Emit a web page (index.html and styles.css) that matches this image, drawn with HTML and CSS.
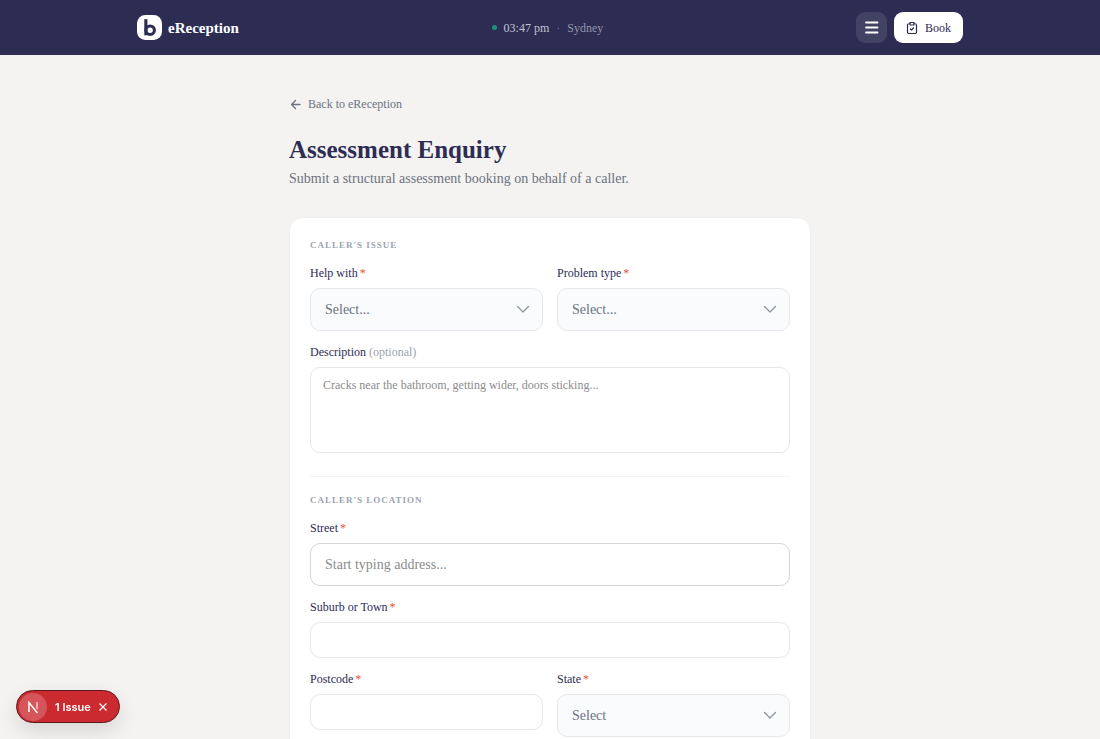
FILE: index.html
```
<!DOCTYPE html>
<html lang="en">
<head>
    <meta charset="UTF-8">
    <meta name="viewport" content="width=device-width, initial-scale=1.0">
    <title>Assessment Enquiry - eReception</title>
    <link rel="stylesheet" href="styles.css">
</head>
<body>

    <header class="topbar">
        <div class="topbar-inner">
            <a href="#" class="brand">
                <svg class="brand-logo" viewBox="0 0 24 24" aria-hidden="true">
                    <rect width="24" height="24" rx="8" fill="#fff"/>
                    <path d="M8.5 4v15.5" fill="none" stroke="#2d2d54" stroke-width="3"/>
                    <circle cx="12.6" cy="14.6" r="4.1" fill="none" stroke="#2d2d54" stroke-width="3"/>
                </svg>
                <span>eReception</span>
            </a>

            <div class="clock">
                <span class="clock-dot"></span>
                <span class="clock-time">03:47 pm</span>
                <span class="clock-sep">·</span>
                <span class="clock-city">Sydney</span>
            </div>

            <div class="actions">
                <button type="button" class="menu-btn" aria-label="Menu">
                    <svg width="17" height="17" viewBox="0 0 17 17" fill="none" stroke="#fff" stroke-width="1.8" stroke-linecap="round" aria-hidden="true">
                        <path d="M3 3.500h11.500M3 8.500h11.500M3 13.500h11.500"/>
                    </svg>
                </button>
                <button type="button" class="book-btn">
                    <svg width="12" height="12" viewBox="0 0 24 24" fill="none" stroke="currentColor" stroke-width="2.4" stroke-linecap="round" stroke-linejoin="round" aria-hidden="true">
                        <rect x="8" y="1" width="8" height="5" rx="1"/>
                        <path d="M16 3.500h2a3 3 0 0 1 3 3V20a3 3 0 0 1-3 3H6a3 3 0 0 1-3-3V6.500a3 3 0 0 1 3-3h2"/>
                        <path d="m9 14 2 2 4-4"/>
                    </svg>
                    Book
                </button>
            </div>
        </div>
    </header>

    <main class="page">
        <a href="#" class="back-link">
            <svg width="13" height="12" viewBox="0 0 13 12" fill="none" stroke="currentColor" stroke-width="1.3" stroke-linecap="round" stroke-linejoin="round" aria-hidden="true">
                <path d="M11 6.500H2.500M6.500 2.500l-4 4 4 4"/>
            </svg>
            Back to eReception
        </a>

        <h1>Assessment Enquiry</h1>
        <p class="subtitle">Submit a structural assessment booking on behalf of a caller.</p>

        <form class="card">
            <section class="form-section">
                <h2>Caller's issue</h2>
                <div class="row">
                    <div class="field">
                        <label for="helpWith">Help with<span class="required">*</span></label>
                        <div class="select-wrap">
                            <select id="helpWith" required>
                                <option value="">Select...</option>
                            </select>
                            <svg class="chevron" viewBox="0 0 14 14" aria-hidden="true"><path d="M1.500 4.500 7 10l5.500-5.500"/></svg>
                        </div>
                    </div>
                    <div class="field">
                        <label for="problemType">Problem type<span class="required">*</span></label>
                        <div class="select-wrap">
                            <select id="problemType" required>
                                <option value="">Select...</option>
                            </select>
                            <svg class="chevron" viewBox="0 0 14 14" aria-hidden="true"><path d="M1.500 4.500 7 10l5.500-5.500"/></svg>
                        </div>
                    </div>
                </div>
                <div class="field">
                    <label for="description">Description <span class="optional">(optional)</span></label>
                    <textarea id="description" placeholder="Cracks near the bathroom, getting wider, doors sticking..."></textarea>
                </div>
            </section>

            <section class="form-section">
                <h2>Caller's location</h2>
                <div class="field">
                    <label for="street">Street<span class="required">*</span></label>
                    <input type="text" id="street" class="address" placeholder="Start typing address..." required>
                </div>
                <div class="field">
                    <label for="suburb">Suburb or Town<span class="required">*</span></label>
                    <input type="text" id="suburb" required>
                </div>
                <div class="row">
                    <div class="field">
                        <label for="postcode">Postcode<span class="required">*</span></label>
                        <input type="text" id="postcode" required>
                    </div>
                    <div class="field">
                        <label for="state">State<span class="required">*</span></label>
                        <div class="select-wrap">
                            <select id="state" required>
                                <option value="">Select</option>
                            </select>
                            <svg class="chevron" viewBox="0 0 14 14" aria-hidden="true"><path d="M1.500 4.500 7 10l5.500-5.500"/></svg>
                        </div>
                    </div>
                </div>
            </section>
        </form>
    </main>

    <div class="issue-badge">
        <button type="button" class="issue-logo" aria-label="Open dev tools">
            <svg width="28" height="28" viewBox="0 0 28 28" fill="none" stroke="#fff" stroke-width="1.5" aria-hidden="true">
                <path d="M10 19V9.500L18.500 20"/>
                <path d="M18 9v7" stroke-opacity="0.7"/>
            </svg>
        </button>
        <button type="button" class="issue-label">1 Issue</button>
        <button type="button" class="issue-close" aria-label="Dismiss">
            <svg width="10" height="10" viewBox="0 0 10 10" fill="none" stroke="#fff" stroke-width="1.2" aria-hidden="true">
                <path d="M1.500 1.500l7 7M8.500 1.500l-7 7"/>
            </svg>
        </button>
    </div>

</body>
</html>
```
FILE: styles.css
```
* {
    box-sizing: border-box;
}
body {
    margin: 0;
    background: #f4f3f1;
    color: #2d2d54;
    font-family: "Liberation Serif", "Times New Roman", serif;
    font-size: 12px;
    line-height: 18px;
}
a {
    color: inherit;
    text-decoration: none;
}
button, input, select, textarea {
    font: inherit;
    color: inherit;
}
button {
    border: none;
    padding: 0;
    background: none;
    cursor: pointer;
}

/* Header */
.topbar {
    background: #2d2d54;
    color: #fff;
}
.topbar-inner {
    display: flex;
    align-items: center;
    justify-content: space-between;
    max-width: 826px;
    height: 55px;
    margin: 0 auto;
}
.brand {
    display: flex;
    align-items: center;
    gap: 6px;
    font-size: 15px;
    font-weight: bold;
}
.brand-logo {
    width: 25px;
    height: 25px;
}
.clock {
    display: flex;
    align-items: center;
    gap: 7px;
}
.clock-dot {
    width: 5px;
    height: 5px;
    border-radius: 50%;
    background: #1c917f;
}
.clock-time {
    color: #c3c3d0;
}
.clock-sep {
    color: #6c6c87;
}
.clock-city {
    color: #9494aa;
}
.actions {
    display: flex;
    gap: 7px;
}
.menu-btn {
    display: flex;
    align-items: center;
    justify-content: center;
    width: 31px;
    height: 31px;
    border-radius: 9px;
    background: #424265;
}
.book-btn {
    display: flex;
    align-items: center;
    gap: 7px;
    height: 31px;
    padding: 0 12px;
    border-radius: 9px;
    background: #fff;
    color: #2d2d54;
}

/* Page */
.page {
    max-width: 522px;
    margin: 0 auto;
    padding: 40px 0;
}
.back-link {
    display: flex;
    align-items: center;
    gap: 6px;
    width: max-content;
    color: #6b7280;
}
h1 {
    margin: 21px 0 4px;
    font-size: 25px;
    line-height: 31px;
}
.subtitle {
    margin: 0 0 28px;
    color: #6b7280;
    font-size: 14px;
    line-height: 20px;
}

/* Form */
.card {
    padding: 20px;
    border: 1px solid #f0f0f0;
    border-radius: 14px;
    background: #fff;
}
.form-section {
    display: flex;
    flex-direction: column;
    gap: 12px;
}
.form-section + .form-section {
    margin-top: 23px;
    padding-top: 16px;
    border-top: 1px solid #f1f2f4;
}
h2 {
    margin: 0;
    color: #9ca3af;
    font-size: 9px;
    line-height: 14px;
    letter-spacing: 1px;
    text-transform: uppercase;
}
.row {
    display: grid;
    grid-template-columns: 1fr 1fr;
    align-items: start;
    gap: 14px;
}
.field {
    display: flex;
    flex-direction: column;
    gap: 6px;
}
.required {
    margin-left: 2px;
    color: #e8503a;
}
.optional {
    color: #9ca3af;
}
input, select, textarea {
    display: block;
    width: 100%;
    height: 36px;
    padding: 0 12px;
    border: 1px solid #e5e7eb;
    border-radius: 10px;
    background: #fff;
    outline: none;
}
input::placeholder, textarea::placeholder {
    color: #8b8b8b;
}
textarea {
    height: 86px;
    padding: 8px 12px;
    resize: none;
}
.address {
    height: 43px;
    padding: 0 14px;
    border-color: #d3d6db;
    font-size: 14px;
}
.select-wrap {
    position: relative;
}
select {
    height: 43px;
    padding: 0 14px;
    appearance: none;
    background: #f9fbfd;
    color: #6b7280;
    font-size: 14px;
}
.chevron {
    position: absolute;
    top: 14px;
    right: 13px;
    width: 14px;
    height: 14px;
    fill: none;
    stroke: #8f95a0;
    stroke-width: 1.3;
    stroke-linecap: round;
    stroke-linejoin: round;
    pointer-events: none;
}

/* Dev overlay */
.issue-badge {
    position: fixed;
    left: 16px;
    bottom: 16px;
    display: flex;
    align-items: center;
    height: 33px;
    padding: 0 11px 0 2px;
    border: 1px solid #5c1a1c;
    border-radius: 17px;
    background: #ca2a30;
    color: #fff;
    font-family: Inter, sans-serif;
    font-size: 11px;
    font-weight: 600;
    box-shadow: 0 8px 20px rgba(0, 0, 0, 0.12);
}
.issue-logo {
    width: 28px;
    height: 28px;
    border-radius: 50%;
    background: #d5555a;
}
.issue-label {
    margin: 0 7px 0 8px;
}
.issue-close {
    display: flex;
}
```
